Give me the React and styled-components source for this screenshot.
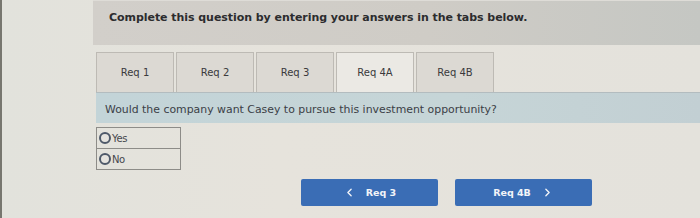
import styled, { createGlobalStyle } from 'styled-components';
import { ChevronLeft, ChevronRight } from 'lucide-react';

const Global = createGlobalStyle`
    html, body {
        margin: 0;
        padding: 0;
        background: #e4e2dc;
        font-family: "DejaVu Sans", Verdana, sans-serif;
    }
`;

const tabs = ['Req 1', 'Req 2', 'Req 3', 'Req 4A', 'Req 4B'];

const App = () => {
    return (
        <>
            <Global />
            <Page>
                <Header>
                    <h1>Complete this question by entering your answers in the tabs below.</h1>
                </Header>
                <Body>
                    <TabRow>
                        {tabs.map((t) => (
                            <Tab key={t} $active={t === 'Req 4A'}>
                                {t}
                            </Tab>
                        ))}
                    </TabRow>
                    <Question>
                        Would the company want Casey to pursue this investment opportunity?
                    </Question>
                    <Choices>
                        <Choice>
                            <Radio />
                            Yes
                        </Choice>
                        <Choice>
                            <Radio />
                            No
                        </Choice>
                    </Choices>
                    <Nav>
                        <NavButton>
                            <ChevronLeft size={13} strokeWidth={2.5} />
                            <span>Req 3</span>
                        </NavButton>
                        <NavButton>
                            <span>Req 4B</span>
                            <ChevronRight size={13} strokeWidth={2.5} />
                        </NavButton>
                    </Nav>
                </Body>
            </Page>
        </>
    );
};

const Page = styled.div`
    width: 700px;
    height: 218px;
    overflow: hidden;
    border-left: 2px solid #77766f;
    box-sizing: border-box;
    background: linear-gradient(90deg, #e2e2dc 0%, #e6e3dc 40%, #e4e2dc 100%);
`;

const Header = styled.div`
    margin-left: 91px;
    height: 45px;
    background: linear-gradient(90deg, #d2cfca 0%, #cfccc6 55%, #c5c7c3 100%);
    border-top: 1px solid #dedcd7;
    box-sizing: border-box;
    padding: 10px 0 0 16px;

    h1 {
        margin: 0;
        font-size: 11px;
        line-height: 14px;
        font-weight: bold;
        color: #2c2c2e;
        letter-spacing: -0.05px;
    }
`;

const Body = styled.div`
    padding: 7px 0 0 94px;
`;

const TabRow = styled.div`
    display: flex;
    gap: 2px;
`;

const Tab = styled.div`
    width: 78px;
    height: 40px;
    box-sizing: border-box;
    display: flex;
    align-items: center;
    justify-content: center;
    font-size: 10px;
    color: #3a3a3c;
    border: 1px solid #bdbab4;
    border-bottom: none;
    background: ${(p) => (p.$active ? '#ebe9e4' : '#dcd9d3')};
`;

const Question = styled.div`
    height: 31px;
    box-sizing: border-box;
    padding: 10px 0 0 9px;
    background: linear-gradient(90deg, #c3d4d8 0%, #c6d5d7 60%, #c2cfd3 100%);
    border-top: 1px solid #b3bcbf;
    font-size: 10.9px;
    color: #3b4046;
`;

const Choices = styled.div`
    margin-top: 4px;
    width: 85px;
    border: 1px solid #8d8c88;
    box-sizing: border-box;
`;

const Choice = styled.div`
    height: 20px;
    display: flex;
    align-items: center;
    gap: 1px;
    font-size: 10px;
    color: #45474d;
    letter-spacing: -0.4px;
    padding-left: 2px;
    & + & {
        border-top: 1px solid #8d8c88;
    }
`;

const Radio = styled.span`
    width: 12px;
    height: 12px;
    border-radius: 50%;
    border: 2px solid #4e5969;
    background: #e6e4df;
    box-sizing: border-box;
`;

const Nav = styled.div`
    display: flex;
    gap: 17px;
    margin: 9px 0 0 205px;
`;

const NavButton = styled.button`
    width: 137px;
    height: 27px;
    display: flex;
    align-items: center;
    justify-content: center;
    gap: 10px;
    border: none;
    border-radius: 2px;
    background: #3a6db5;
    color: #f2f4f8;
    font-family: "DejaVu Sans", Verdana, sans-serif;
    font-size: 9.5px;
    font-weight: bold;
    padding: 0;
`;

export default App;
